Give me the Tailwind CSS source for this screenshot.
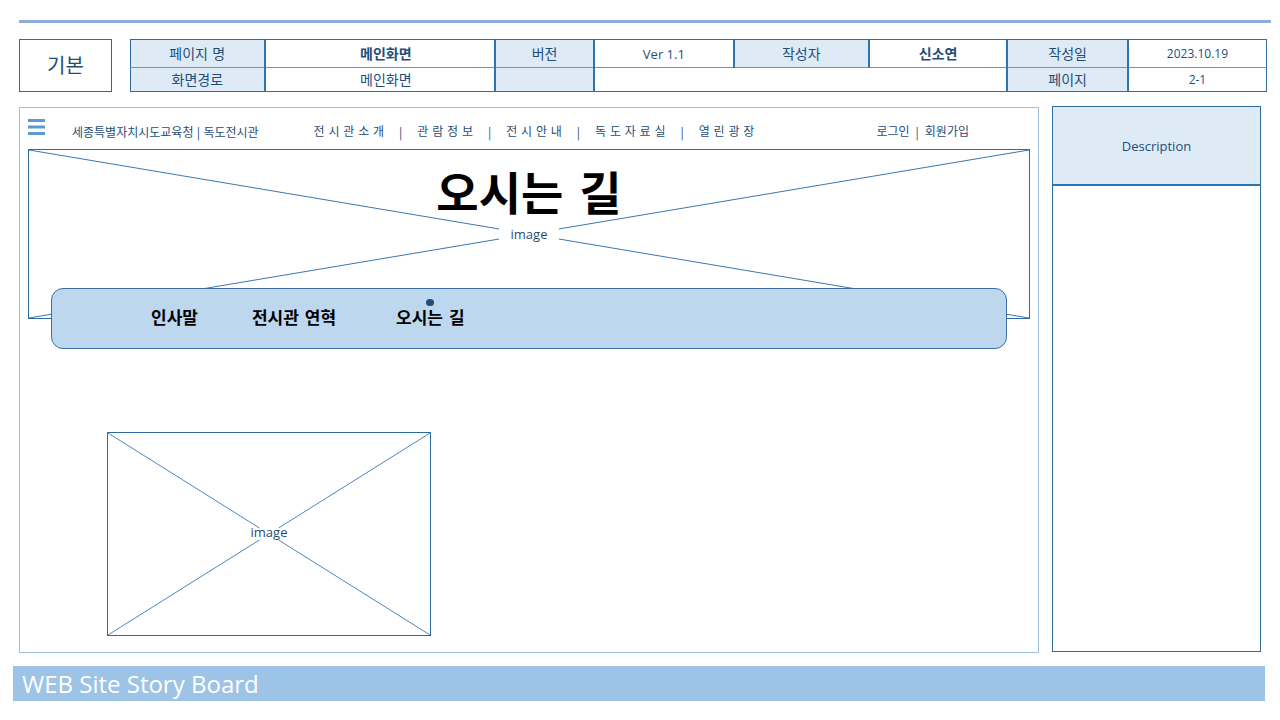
<!DOCTYPE html>
<html lang="ko">
<head>
<meta charset="utf-8">
<meta name="viewport" content="width=device-width, initial-scale=1">
<title>WEB Site Story Board</title>
<script src="https://cdn.jsdelivr.net/npm/@tailwindcss/browser@4"></script>
</head>
<body class="bg-white pt-5 font-['DejaVu_Sans','Noto_Sans_CJK_KR',sans-serif] text-[#1f4e79]">
  <div class="ml-[19px] mr-[9px] h-[3px] bg-[#8faadc]"></div>

  <header class="ml-[19px] mr-[13px] mt-4 flex gap-[18px]">
    <div class="flex w-[93px] shrink-0 items-center justify-center border border-[#2e6b9e] text-[20px] leading-6">기본</div>
    <table class="w-full flex-1 table-fixed border-collapse border border-[#2e6b9e] text-center text-[14px] leading-5">
      <colgroup>
        <col class="w-[11.8%]"><col class="w-[20.3%]"><col class="w-[8.7%]"><col class="w-[12.3%]"><col class="w-[11.9%]"><col class="w-[12.2%]"><col class="w-[10.6%]"><col class="w-[12.2%]">
      </colgroup>
      <tbody>
        <tr class="h-[28px]">
          <th scope="row" class="border-b border-b-[#5b9bd5] bg-[#deeaf6] p-0 font-normal">페이지 명</th>
          <td class="border-b border-l-2 border-b-[#5b9bd5] border-l-[#2e75b0] p-0 pl-3 font-bold">메인화면</td>
          <th scope="row" class="border-b border-l-2 border-b-[#5b9bd5] border-l-[#2e75b0] bg-[#deeaf6] p-0 font-normal">버전</th>
          <td class="border-b border-l-2 border-b-[#5b9bd5] border-l-[#2e75b0] p-0 font-['Open_Sans',sans-serif] text-[13px]">Ver 1.1</td>
          <th scope="row" class="border-b border-l-2 border-b-[#5b9bd5] border-l-[#2e75b0] bg-[#deeaf6] p-0 font-normal">작성자</th>
          <td class="border-b border-l-2 border-b-[#5b9bd5] border-l-[#2e75b0] p-0 font-bold">신소연</td>
          <th scope="row" class="border-b border-l-2 border-b-[#5b9bd5] border-l-[#2e75b0] bg-[#deeaf6] p-0 font-normal">작성일</th>
          <td class="border-b border-l-2 border-b-[#5b9bd5] border-l-[#2e75b0] p-0 font-['Open_Sans',sans-serif] text-[12px]">2023.10.19</td>
        </tr>
        <tr class="h-[24px]">
          <th scope="row" class="bg-[#deeaf6] p-0 font-normal">화면경로</th>
          <td class="border-l-2 border-[#2e75b0] p-0 pl-3">메인화면</td>
          <td class="border-l-2 border-[#2e75b0] bg-[#deeaf6] p-0"></td>
          <td colspan="3" class="border-l-2 border-[#2e75b0] p-0"></td>
          <th scope="row" class="border-l-2 border-[#2e75b0] bg-[#deeaf6] p-0 font-normal">페이지</th>
          <td class="border-l-2 border-[#2e75b0] p-0 font-['Open_Sans',sans-serif] text-[12px]">2-1</td>
        </tr>
      </tbody>
    </table>
  </header>

  <div class="ml-[19px] mr-[19px] mt-[14px] flex gap-[13px]">
    <main class="mt-px min-h-[546px] flex-1 border border-[#9dbfdc] px-2">
      <div class="flex h-[41px] items-start pt-[11px] text-[12px] leading-[26px]">
        <button type="button" aria-label="메뉴" class="shrink-0">
          <svg class="block" width="17" height="16" viewBox="0 0 17 16" fill="#5b9bd5"><path d="M0 0h17v3H0zM0 6.5h17v3H0zM0 13h17v3H0z"/></svg>
        </button>
        <a href="#" class="ml-[27px] font-['Noto_Sans_CJK_KR',sans-serif]">세종특별자치시도교육청 | 독도전시관</a>
        <nav class="ml-[55px] flex gap-[15px] whitespace-nowrap">
          <a href="#">전 시 관 소 개</a><span class="font-['Noto_Sans_CJK_KR',sans-serif]">|</span>
          <a href="#">관 람 정 보</a><span class="font-['Noto_Sans_CJK_KR',sans-serif]">|</span>
          <a href="#">전 시 안 내</a><span class="font-['Noto_Sans_CJK_KR',sans-serif]">|</span>
          <a href="#">독 도 자 료 실</a><span class="font-['Noto_Sans_CJK_KR',sans-serif]">|</span>
          <a href="#">열 린 광 장</a>
        </nav>
        <div class="ml-auto mr-[61px] flex gap-[6px] whitespace-nowrap">
          <a href="#">로그인</a><span class="font-['Noto_Sans_CJK_KR',sans-serif]">|</span><a href="#">회원가입</a>
        </div>
      </div>

      <section class="relative flex h-[170px] items-center justify-center border border-[#2e6b9e]">
        <svg class="absolute inset-0 h-full w-full" stroke="#3a78b4" stroke-width="1">
          <line x1="0" y1="0" x2="47%" y2="47%"/><line x1="100%" y1="0" x2="53%" y2="47%"/>
          <line x1="0" y1="100%" x2="47%" y2="53%"/><line x1="100%" y1="100%" x2="53%" y2="53%"/>
        </svg>
        <h1 class="absolute inset-x-0 top-[14px] text-center text-[46px] font-bold leading-[60px] text-black">오시는 길</h1>
        <span class="relative font-['Open_Sans',sans-serif] text-[13px] leading-5">image</span>
      </section>

      <nav class="relative mx-[23px] -mt-[31px] flex h-[61px] rounded-xl border border-[#3a6ea5] bg-[#bdd7ee] pl-[99px] pt-[17px] text-[17px] font-bold leading-6 text-black">
        <a href="#">인사말</a>
        <a href="#" class="ml-[54px]">전시관 연혁</a>
        <a href="#" class="relative ml-[60px]" aria-current="page">오시는 길<span class="absolute -top-[7px] left-1/2 h-[7px] w-2 -translate-x-1/2 rounded-full bg-[#1f4e79]"></span></a>
      </nav>

      <figure class="relative ml-[79px] mt-[83px] flex h-[204px] w-[324px] items-center justify-center border border-[#2e6b9e] pb-1">
        <svg class="absolute inset-0 h-full w-full" stroke="#4a86c4" stroke-width="1">
          <line x1="0" y1="0" x2="47%" y2="47%"/><line x1="100%" y1="0" x2="53%" y2="47%"/>
          <line x1="0" y1="100%" x2="47%" y2="53%"/><line x1="100%" y1="100%" x2="53%" y2="53%"/>
        </svg>
        <figcaption class="relative font-['Open_Sans',sans-serif] text-[13px] leading-5">image</figcaption>
      </figure>
    </main>

    <aside class="mb-px w-[209px] shrink-0 border border-[#2e6b9e]">
      <h2 class="flex h-[79px] items-center justify-center border-b-2 border-[#2e75b0] bg-[#deeaf6] font-['Open_Sans',sans-serif] text-[13px] leading-5">Description</h2>
    </aside>
  </div>

  <footer class="ml-[13px] mr-[15px] mt-[13px] bg-[#9dc3e6] pl-[9px] font-['Open_Sans',sans-serif] text-[24px] leading-[35px] text-white">WEB Site Story Board</footer>
</body>
</html>
